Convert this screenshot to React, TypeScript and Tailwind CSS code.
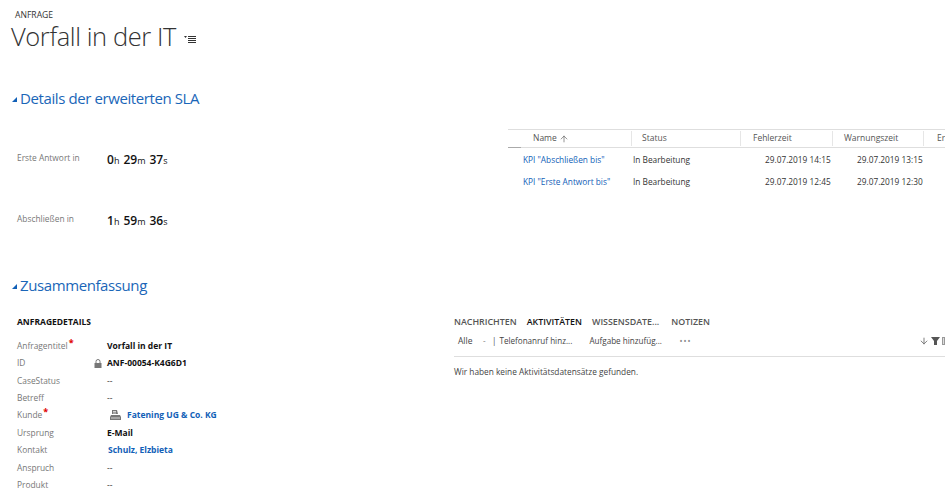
import { ArrowUp, ArrowDown } from 'lucide-react';

const font = { fontFamily: '"Open Sans", "Noto Sans", sans-serif' };

function Caret() {
  return <span className="mr-[3px] mt-[3px] h-0 w-0 border-b-[5px] border-l-[5px] border-b-[#1160b7] border-l-transparent" />;
}

function SectionTitle({ children }: { children: string }) {
  return (
    <div className="flex h-[22px] items-center pl-[12px] text-[15px] leading-[22px] tracking-[-0.4px] text-[#1a66b8]">
      <Caret />
      <span>{children}</span>
    </div>
  );
}

function Timer({ label, parts }: { label: string; parts: [string, string][] }) {
  return (
    <div className="flex h-[20px] items-center">
      <span className="w-[90px] text-[8.4px] text-[#777]">{label}</span>
      <span className="flex gap-[4px] font-semibold text-[#111]">
        {parts.map(([num, unit]) => (
          <span key={unit}>
            <span className="text-[12px]">{num}</span>
            <span className="text-[9px] font-normal">{unit}</span>
          </span>
        ))}
      </span>
    </div>
  );
}

function HeadCell({ width, children }: { width: string; children: React.ReactNode }) {
  return (
    <div className={`${width} flex h-[15px] shrink-0 items-center border-r border-[#e6e6e6] text-[8.5px] text-[#555]`}>
      {children}
    </div>
  );
}

function Row({ name, fail, warn }: { name: string; fail: string; warn: string }) {
  return (
    <div className="flex h-[22px] items-center text-[8.3px] text-[#333]">
      <span className="w-[110px] pl-[15px] text-[#1160b7]">{name}</span>
      <span className="w-[111px] pl-[15px]">In Bearbeitung</span>
      <span className="w-[128px] pl-[36px] whitespace-nowrap">{fail}</span>
      <span className="whitespace-nowrap">{warn}</span>
    </div>
  );
}

function Field({ label, required, children }: { label: string; required?: boolean; children?: React.ReactNode }) {
  return (
    <div className="flex h-[17.4px] items-center">
      <span className="flex w-[90px] text-[8.4px] text-[#777]">
        {label}
        {required && <span className="ml-[1px] -mt-[3px] text-[9px] font-bold leading-[12px] text-[#e00000]">*</span>}
      </span>
      {children}
    </div>
  );
}

const Value = ({ children }: { children: string }) => (
  <span className="text-[8.5px] font-bold text-[#111]">{children}</span>
);

const Empty = () => <span className="text-[8.5px] text-[#333]">--</span>;

function Tab({ children, active }: { children: string; active?: boolean }) {
  return <span className={`text-[8.9px] font-semibold ${active ? 'font-bold text-[#111]' : 'text-[#555]'}`}>{children}</span>;
}

export default function App() {
  return (
    <div className="h-[500px] w-[945px] overflow-hidden bg-white" style={font}>
      <div className="pl-[15px] pt-[10px] text-[8.6px] leading-[11px] text-[#333]">ANFRAGE</div>
      <div className="flex items-center pl-[11px] text-[25.5px] font-light leading-[30px] tracking-[-0.4px] text-[#333]">
        <span>Vorfall in der IT</span>
        <svg className="ml-[8px] mt-[5px]" width="13" height="8" viewBox="0 0 13 8" fill="none">
          <path d="M0 1h3L1.5 3z" fill="#333" />
          <path d="M4 1.5h8M4 3.5h8M4 5.5h8M4 7.5h8" stroke="#333" />
        </svg>
      </div>

      <div className="mt-[36px]">
        <SectionTitle>Details der erweiterten SLA</SectionTitle>
      </div>

      <div className="mt-[20px] flex">
        <div className="w-[508px] pl-[17px] pt-[19px]">
          <Timer label="Erste Antwort in" parts={[['0', 'h'], ['29', 'm'], ['37', 's']]} />
          <div className="h-[41px]" />
          <Timer label="Abschließen in" parts={[['1', 'h'], ['59', 'm'], ['36', 's']]} />
        </div>
        <div className="w-[437px] overflow-hidden">
          <div className="flex h-[19px] items-center border-y border-[#dedede]">
            <HeadCell width="w-[124px]">
              <span className="flex items-center pl-[25px]">Name <ArrowUp className="ml-[2px] h-[10px] w-[10px]" strokeWidth={1.5} /></span>
            </HeadCell>
            <HeadCell width="w-[109px]"><span className="pl-[10px]">Status</span></HeadCell>
            <HeadCell width="w-[92px]"><span className="pl-[12px]">Fehlerzeit</span></HeadCell>
            <HeadCell width="w-[91px]"><span className="pl-[11px]">Warnungszeit</span></HeadCell>
            <span className="shrink-0 pl-[13px] text-[8.5px] text-[#555]">Erf</span>
          </div>
          <div className="relative -mt-px h-px w-[13px] bg-[#aaa]" />
          <div className="pt-[1px]">
            <Row name={'KPI "Abschließen bis"'} fail="29.07.2019 14:15" warn="29.07.2019 13:15" />
            <Row name={'KPI "Erste Antwort bis"'} fail="29.07.2019 12:45" warn="29.07.2019 12:30" />
          </div>
        </div>
      </div>

      <div className="mt-[45px]">
        <SectionTitle>Zusammenfassung</SectionTitle>
      </div>

      <div className="mt-[19px] flex">
        <div className="w-[454px] pl-[17px]">
          <div className="h-[17px] text-[8.5px] font-bold leading-[14px] text-[#111]">ANFRAGEDETAILS</div>
          <div className="pt-[5.5px]">
            <Field label="Anfragentitel" required><Value>Vorfall in der IT</Value></Field>
            <Field label="ID">
              <svg className="-ml-[13px] mr-[5px]" width="8" height="9" viewBox="0 0 8 9" fill="none">
                <path d="M2 4V2.5a2 2 0 0 1 4 0V4" stroke="#777" />
                <path d="M0.5 4h7v5h-7z" fill="#777" />
              </svg>
              <Value>ANF-00054-K4G6D1</Value>
            </Field>
            <Field label="CaseStatus"><Empty /></Field>
            <Field label="Betreff"><Empty /></Field>
            <Field label="Kunde" required>
              <svg className="ml-[3px] mr-[6px]" width="11" height="11" viewBox="0 0 11 11">
                <path d="M2 0h5l1 4H2zM1 5h9l1 2v3H0V7z" fill="#777" />
                <path d="M3 1.5h3M3 3h3M1 8h9" stroke="#fff" strokeWidth="0.7" />
              </svg>
              <span className="text-[8.5px] font-bold text-[#1160b7]">Fatening UG &amp; Co. KG</span>
            </Field>
            <Field label="Ursprung"><Value>E-Mail</Value></Field>
            <Field label="Kontakt"><span className="pl-[1px] text-[8.5px] font-bold text-[#1160b7]">Schulz, Elzbieta</span></Field>
            <Field label="Anspruch"><Empty /></Field>
            <Field label="Produkt"><Empty /></Field>
          </div>
        </div>

        <div className="flex-1">
          <div className="flex h-[17px] leading-[14px]">
            <div className="flex gap-[10px]">
              <Tab>NACHRICHTEN</Tab>
              <Tab active>AKTIVITÄTEN</Tab>
              <Tab>WISSENSDATE...</Tab>
            </div>
            <div className="ml-[12px] flex">
              <Tab>NOTIZEN</Tab>
            </div>
          </div>
          <div className="flex h-[18px] items-center text-[8.1px] text-[#444]">
            <span className="w-[29px] pl-[4px] text-[8.5px]">Alle</span>
            <span className="w-[9px] text-[#888]">-</span>
            <span className="mr-[3px] text-[#555]">|</span>
            <span className="w-[90px]">Telefonanruf hinz...</span>
            <span className="w-[90px]">Aufgabe hinzufüg...</span>
            <span className="tracking-[1px] text-[#888]">•••</span>
            <span className="ml-auto flex items-center gap-[2px] pr-0">
              <ArrowDown className="h-[10px] w-[10px] text-[#666]" />
              <svg width="9" height="8" viewBox="0 0 9 8"><path d="M0 0h9L6 4v4H3V4z" fill="#555" /></svg>
              <span className="h-[8px] w-[3px] border border-[#999] bg-[#ddd]" />
            </span>
          </div>
          <div className="mt-[6px] border-t border-[#dedede] pt-[9px] text-[8.3px] leading-[12px] text-[#444]">
            Wir haben keine Aktivitätsdatensätze gefunden.
          </div>
        </div>
      </div>
    </div>
  );
}
